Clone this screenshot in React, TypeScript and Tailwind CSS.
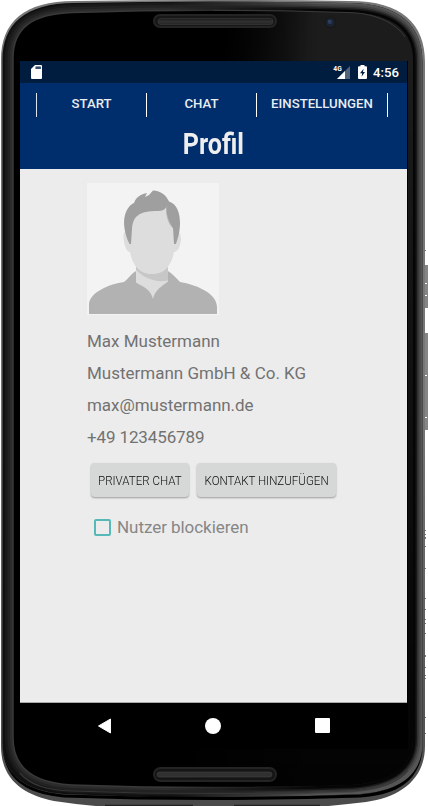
import React from 'react';

const BODY =
  'M1 60 C1 22 24 1 74 1 Q212 -1 350 1 C402 1 425 24 425 62 L425 746 C425 778 402 797 366 802 Q340 805 318 807 L108 807 Q80 805 54 801 C24 795 1 780 1 746 Z';
const FRAME =
  'M2.5 60 C2.5 24 25 3.5 74 3 Q212 0 350 3 C399 3.5 422.5 25 422.5 62 L422.5 742 C422.5 776 400 791 360 794 Q212 801 64 794 C27 791 2.5 776 2.5 742 Z';
const GLASS =
  'M13 58 C13 28 32 14 72 12.5 Q212 8 352 12.5 C392 14 413 30 413 60 L413 738 C413 768 392 782 352 785 Q212 790 72 785 C34 783 13 768 13 738 Z';

function Device() {
  return (
    <svg className="absolute inset-0" width="428" height="806" viewBox="0 0 428 806">
      <defs>
        <linearGradient id="rim" x1="0" y1="0" x2="0" y2="1">
          <stop offset="0" stopColor="#777" />
          <stop offset="0.5" stopColor="#777" />
          <stop offset="1" stopColor="#4a4a4a" />
        </linearGradient>
        <linearGradient id="glass" gradientUnits="userSpaceOnUse" x1="225" y1="25" x2="310" y2="35">
          <stop offset="0" stopColor="#000" />
          <stop offset="1" stopColor="#1c1c1c" />
        </linearGradient>
        <linearGradient id="fade" gradientUnits="userSpaceOnUse" x1="0" y1="60" x2="0" y2="785">
          <stop offset="0" stopColor="#000" stopOpacity="0" />
          <stop offset="0.9" stopColor="#000" stopOpacity="0.82" />
          <stop offset="1" stopColor="#000" stopOpacity="0.9" />
        </linearGradient>
        <linearGradient id="slot" x1="0" y1="0" x2="0" y2="1">
          <stop offset="0" stopColor="#1b1b1b" />
          <stop offset="0.5" stopColor="#303030" />
          <stop offset="1" stopColor="#262626" />
        </linearGradient>
        <linearGradient id="blend" gradientUnits="userSpaceOnUse" x1="170" y1="0" x2="320" y2="0">
          <stop offset="0" stopColor="#000" />
          <stop offset="1" stopColor="#fff" />
        </linearGradient>
        <mask id="right" maskUnits="userSpaceOnUse" x="0" y="0" width="428" height="806">
          <rect width="428" height="806" fill="url(#blend)" />
        </mask>
      </defs>
      <g fill="#858585">
        <rect x="424" y="265" width="4" height="43" />
        <rect x="424" y="333" width="4" height="97" />
      </g>
      <g fill="#fff">
        <rect x="425" y="283" width="2" height="1" />
        <rect x="425" y="295" width="2" height="1" />
        <rect x="425" y="375" width="2" height="1" />
        <rect x="425" y="417" width="2" height="1" />
      </g>
      <g fill="#777">
        {[250, 530, 534, 537, 538, 546, 568, 598, 609, 619, 623, 633, 655, 656, 667, 675, 678, 717, 733].map((y) => (
          <rect key={y} x="425" y={y} width="1" height="1" />
        ))}
      </g>
      <path d={BODY} fill="url(#rim)" />
      <path d={FRAME} fill="#101010" />
      <path d={GLASS} fill="#202020" stroke="#191919" strokeWidth="16" />
      <path d={GLASS} fill="#202020" stroke="#222" strokeWidth="11" />
      <path d={GLASS} fill="#202020" stroke="#2c2c2c" strokeWidth="6" />
      <path d={GLASS} fill="#000" stroke="#3a3a3a" strokeWidth="1.5" />
      <g mask="url(#right)">
        <path d={FRAME} fill="#555" />
        <path d={GLASS} fill="none" stroke="#454545" strokeWidth="15" />
        <path d={GLASS} fill="none" stroke="#303030" strokeWidth="11" />
        <path d={GLASS} fill="none" stroke="#181818" strokeWidth="8" />
        <path d={GLASS} fill="none" stroke="#050505" strokeWidth="5" />
        <path d={GLASS} fill="url(#glass)" />
        <path d={GLASS} fill="url(#fade)" />
        <path d="M213 10.3 Q284 10 352 12.7 C378 14 396 24 405 37" fill="none" stroke="#3a3a3a" strokeWidth="1" />
      </g>
      <path
        d="M2.5 746 C5 777 27 791 64 794.5 Q212 799.5 360 794.5 C400 790.5 420 776 423 746 C421 779 400 795 360 797.5 Q212 802.5 64 797.5 C27 794 4 780 2.5 746 Z"
        fill="#000"
      />
      <path d="M20 773 C31 786 48 790 72 791 Q212 796 352 791 C379 789 397 784 408 770" fill="none" stroke="#363636" strokeWidth="1.2" />
      <path d="M105 805.5 H193 M234 805.5 H320" stroke="#222" strokeWidth="1.5" />
      <g>
        <rect x="153" y="14" width="124" height="14" rx="7" fill="#242424" />
        <rect x="155" y="16" width="120" height="10" rx="5" fill="#171717" />
        <rect x="158" y="18.5" width="115" height="6" rx="3" fill="url(#slot)" stroke="#383838" strokeWidth="0.7" />
        <rect x="153" y="767" width="124" height="15" rx="7.5" fill="#242424" />
        <rect x="155" y="769" width="120" height="11" rx="5.5" fill="#151515" />
        <rect x="157" y="772" width="115" height="5" rx="2.5" fill="#303030" stroke="#444" strokeWidth="0.6" />
      </g>
      <circle cx="330.5" cy="22.5" r="6" fill="#191919" />
      <circle cx="330.3" cy="22.5" r="4.5" fill="#1b2230" />
      <circle cx="330" cy="22" r="2.3" fill="#283753" />
      <circle cx="329" cy="21" r="0.7" fill="#40527a" />
      <rect x="407" y="61" width="1" height="688" fill="#000" />
    </svg>
  );
}

function StatusBar() {
  return (
    <div className="flex h-[22px] items-center bg-[#001c3f] pl-[11px] pr-2 text-white">
      <svg width="11" height="14" viewBox="0 0 11 14">
        <path d="M4 0H10Q11 0 11 1V13Q11 14 10 14H1Q0 14 0 13V4Z" fill="#fff" />
        <path d="M4.4 1.5H10V4H4.4Z" fill="#475975" />
        <path d="M6 1.5V4M8 1.5V4" stroke="#15305a" strokeWidth=".7" />
      </svg>
      <svg className="ml-auto" width="18" height="14" viewBox="0 0 18 14">
        <path d="M17 1V14H4Z" fill="#52637e" />
        <path d="M12 6V14H4Z" fill="#fff" />
        <text x="0.3" y="6.2" fill="#fff" fontSize="8" fontWeight="700" textLength="8.4" lengthAdjust="spacingAndGlyphs">
          4G
        </text>
      </svg>
      <svg className="ml-[7px]" width="9" height="14" viewBox="0 0 9 14">
        <path d="M2.5 0H6.5V1.3H8Q9 1.3 9 2.3V13Q9 14 8 14H1Q0 14 0 13V2.3Q0 1.3 1 1.3H2.5Z" fill="#fff" />
        <path d="M5.6 3.7L2 8.3H4.2L3.5 11.8L7 7.1H4.9Z" fill="#001c3f" />
      </svg>
      <span className="ml-[6px] w-[26px] whitespace-nowrap text-[13.2px] font-medium leading-[23px]">4:56</span>
    </div>
  );
}

function Header() {
  return (
    <header className="h-[86px] bg-[#002d6b] text-[#e9edf2]">
      <nav className="ml-4 flex h-[34px] items-end text-[13.2px] font-medium leading-[21px]">
        <div className="h-6 w-[110px] border-l border-[#e0e4ea] text-center">START</div>
        <div className="h-6 w-[110px] border-l border-white text-center">CHAT</div>
        <div className="h-6 w-[132px] border-x border-white text-center">EINSTELLUNGEN</div>
      </nav>
      <h1 className="flex h-[52px] justify-center text-[29px] font-bold leading-[54px] text-[#eee]">
        <span className="inline-block origin-center scale-x-[0.865]">Profil</span>
      </h1>
    </header>
  );
}

function Avatar() {
  return (
    <svg width="132" height="132" viewBox="0 0 132 132" className="block bg-[#f3f3f3]">
      <path d="M49 80H81V100L66 118L49 100Z" fill="#ddd" />
      <path d="M49 83C56 92 72 94 81 84V97.500C68 100 57 95 49 87Z" fill="#c7c7c7" />
      <path d="M40 49C36 48 36 53 37 58C38 65 40 69 43 69C45 79 50 91 65 91C80 91 85 79 87 69C91 69 93 64 94 57C94 52 93 49 90 49L82 20H46Z" fill="#ddd" />
      <path d="M42.500 61C37 50 36 39 38 32C40 25 43 22 47 20C49 14 54 11 60 10L58 14L62 12L66 7.500C74 8 79 12 82 18.500C90 21 93 30 93 40C93 50 90.500 56 89 61H87L86 45C80 37 79 28 79.500 24C77 27 75 28 71 28C52 28 46 33 45 46L44 61Z" fill="#9f9f9f" />
      <path d="M79.500 23C79 32 81 40 86 45" stroke="#adadad" strokeWidth=".7" fill="none" />
      <path d="M2 131V122C2 109 23 101 37 99C42 95 45 90 49 88V99.500C57 104 64 107 66 116C68 107 75 103 81 98.500V88C86 91 89 95 93 99C106 101 130 109 130 124V131Z" fill="#b2b2b2" />
    </svg>
  );
}

export default function App() {
  return (
    <div className="relative h-[806px] w-[428px] overflow-hidden bg-white font-[Roboto,sans-serif]">
      <Device />
      <div className="relative pl-5 pt-[61px]">
        <div className="flex h-[688px] w-[387px] flex-col bg-black">
          <StatusBar />
          <Header />
          <main className="h-[534px] border-b border-[#aaa] bg-[#ececec] pl-[67px] pt-[14px] text-[#727272]">
            <Avatar />
            <div className="mt-[10px] whitespace-nowrap text-[17px] leading-8">
              <p>Max Mustermann</p>
              <p>Mustermann GmbH &amp; Co. KG</p>
              <p className="tracking-[-0.04px]">max@mustermann.de</p>
              <p className="tracking-[-0.12px]">+49 123456789</p>
            </div>
            <div className="ml-1 mt-[10px] flex gap-2 text-[13.5px] text-[#0c0c0c]">
              <button className="flex h-[34px] w-[98px] items-center justify-center whitespace-nowrap rounded-sm bg-[#d6d8d7] shadow-[0_1px_2px_rgba(0,0,0,0.35)]">
                <span className="inline-block scale-x-[0.855] font-light">PRIVATER CHAT</span>
              </button>
              <button className="flex h-[34px] w-[139px] items-center justify-center whitespace-nowrap rounded-sm bg-[#d6d8d7] shadow-[0_1px_2px_rgba(0,0,0,0.35)]">
                <span className="inline-block scale-x-[0.855] font-light">KONTAKT HINZUFÜGEN</span>
              </button>
            </div>
            <label className="ml-[7px] mt-[18px] flex items-center text-[17px] leading-6 text-[#868686]">
              <span className="h-[17px] w-[17px] rounded-[2px] border-2 border-[#57b9b7]" />
              <span className="ml-[6px] tracking-[-0.05px]">Nutzer blockieren</span>
            </label>
          </main>
          <div className="flex h-[46px] items-center pb-px pl-[77px]">
            <svg width="14" height="16" viewBox="0 0 14 16"><path d="M13.500 1V15L1.500 8Z" fill="#fff" stroke="#fff" strokeLinejoin="round" /></svg>
            <span className="ml-[94px] h-4 w-4 rounded-full bg-white" />
            <span className="ml-[94px] h-[15px] w-[15px] rounded-[1px] bg-white" />
          </div>
        </div>
      </div>
    </div>
  );
}
